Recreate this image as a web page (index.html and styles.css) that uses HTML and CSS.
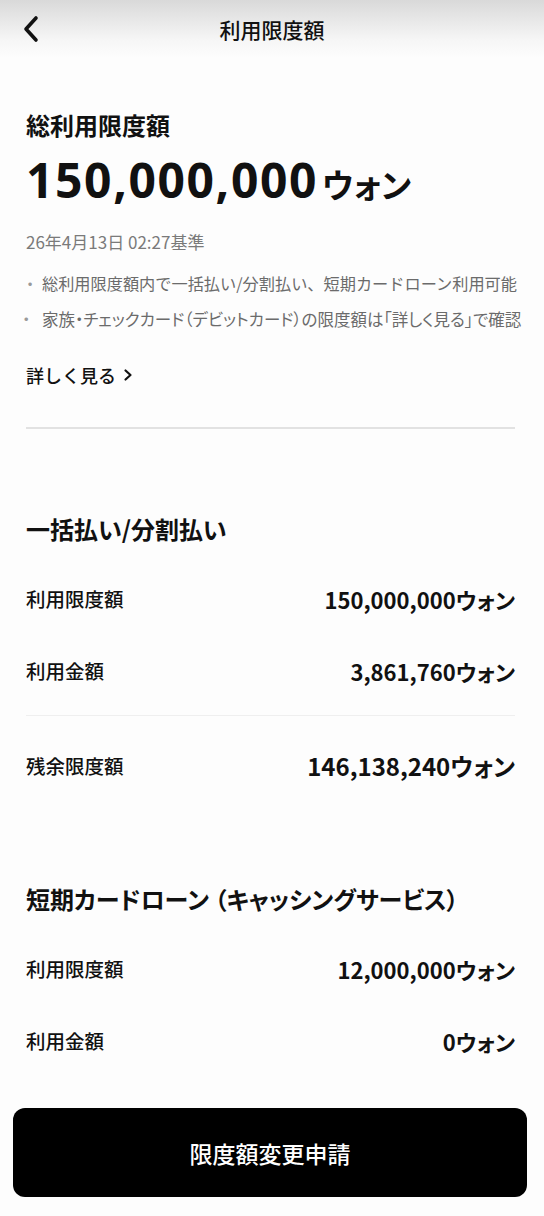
FILE: index.html
```html
<!DOCTYPE html>
<html>
<head>
    <meta charset="utf-8">
    <link rel="stylesheet" href="styles.css">
</head>
<body>
    <div class="app-bar">
        <button type="button" class="back-button" aria-label="戻る">
            <svg width="20" height="28" viewBox="0 0 20 28">
                <path d="M15 3 L5 14 L15 25" fill="none" stroke="#111" stroke-width="3.6" stroke-linecap="round" stroke-linejoin="round"/>
            </svg>
        </button>
        <h1 class="app-title">利用限度額</h1>
    </div>

    <div class="content">
        <!-- Total limit -->
        <section class="summary">
            <h2 class="summary-label">総利用限度額</h2>
            <div class="summary-amount">
                <span class="big-number">150,000,000</span><span class="big-unit">ウォン</span>
            </div>
            <p class="summary-date">26年4月13日 02:27基準</p>
            <ul class="notes">
                <li class="wide">総利用限度額内で一括払い/分割払い、短期カードローン利用可能</li>
                <li>家族・チェックカード（デビットカード）の限度額は「詳しく見る」で確認</li>
            </ul>
            <a class="more-link" href="#">詳しく見る
                <svg width="12" height="14" viewBox="0 0 12 14">
                    <path d="M3.5 2.5 L8.5 7 L3.5 11.5" fill="none" stroke="#111" stroke-width="2.2" stroke-linecap="round" stroke-linejoin="round"/>
                </svg>
            </a>
        </section>

        <hr class="divider">

        <!-- Lump sum / installments -->
        <section class="limit-section">
            <h3 class="section-title">一括払い/分割払い</h3>
            <div class="limit-row">
                <span class="row-label">利用限度額</span>
                <span class="row-value">150,000,000ウォン</span>
            </div>
            <div class="limit-row">
                <span class="row-label">利用金額</span>
                <span class="row-value">3,861,760ウォン</span>
            </div>
            <hr class="row-divider">
            <div class="limit-row remain">
                <span class="row-label">残余限度額</span>
                <span class="row-value">146,138,240ウォン</span>
            </div>
        </section>

        <!-- Cashing -->
        <section class="limit-section cashing">
            <h3 class="section-title">短期カードローン （キャッシングサービス）</h3>
            <div class="limit-row">
                <span class="row-label">利用限度額</span>
                <span class="row-value">12,000,000ウォン</span>
            </div>
            <div class="limit-row">
                <span class="row-label">利用金額</span>
                <span class="row-value">0ウォン</span>
            </div>
        </section>
    </div>

    <div class="bottom-bar">
        <button type="button" class="apply-button">限度額変更申請</button>
    </div>
</body>
</html>
```

FILE: styles.css
```css
body {
    margin: 0;
    background: #fdfdfd;
    font-family: "Noto Sans CJK JP", "Noto Sans", sans-serif;
    color: #111;
}

.app-bar {
    position: relative;
    height: 58px;
    display: flex;
    align-items: center;
    justify-content: center;
    background: linear-gradient(#d9d9d9, #f6f6f6 40px, #fdfdfd);
}

.back-button {
    position: absolute;
    left: 21px;
    top: 15px;
    background: none;
    border: none;
    padding: 0;
    cursor: pointer;
}

.app-title {
    margin: 0;
    font-size: 21px;
    font-weight: 500;
    line-height: 58px;
}

.content {
    padding: 0 29px 0 26px;
}

.summary {
    padding-top: 51px;
}

.summary-label {
    margin: 0;
    font-size: 24px;
    font-weight: 700;
    line-height: 32px;
}

.summary-amount {
    margin-top: 11px;
    display: flex;
    align-items: baseline;
    line-height: 56px;
}

.big-number {
    font-family: "Noto Sans", sans-serif;
    font-size: 48px;
    font-weight: 700;
    letter-spacing: 1.6px;
}

.big-unit {
    margin-left: 4px;
    font-size: 33px;
    font-weight: 700;
    font-feature-settings: "palt";
}

.summary-date {
    margin: 18px 0 0;
    font-size: 17px;
    line-height: 24px;
    color: #7a7a7a;
}

.notes {
    list-style: none;
    margin: 17px 0 0;
    padding: 0;
}

.notes li {
    position: relative;
    padding-left: 16px;
    font-size: 16.5px;
    line-height: 24px;
    color: #6b6b6b;
    white-space: nowrap;
    font-feature-settings: "palt";
}

.notes li.wide {
    font-size: 16.2px;
    font-feature-settings: normal;
}

.notes li + li {
    margin-top: 12px;
}

.notes li::before {
    content: "・";
    position: absolute;
    left: -4px;
    top: 0;
    color: #999;
}

.more-link {
    display: inline-flex;
    align-items: center;
    gap: 6px;
    margin-top: 31px;
    font-size: 18px;
    font-weight: 500;
    line-height: 26px;
    color: #111;
    text-decoration: none;
}

.divider {
    margin: 39px 0 0;
    border: none;
    border-top: 2px solid #e2e2e2;
}

.limit-section {
    padding-top: 84px;
}

.limit-section.cashing {
    padding-top: 79px;
}

.section-title {
    margin: 0 0 18px;
    font-size: 24px;
    font-weight: 700;
    line-height: 32px;
    font-feature-settings: "palt";
}

.limit-row {
    display: flex;
    justify-content: space-between;
    align-items: center;
    padding: 22px 0;
    line-height: 28px;
}

.row-label {
    font-size: 19.5px;
    font-weight: 500;
}

.row-value {
    font-size: 22px;
    font-weight: 600;
    font-feature-settings: "palt";
}

.row-divider {
    margin: 8px 0 0;
    border: none;
    border-top: 1px solid #efefef;
}

.limit-row.remain {
    padding-top: 34px;
    line-height: 32px;
}

.limit-row.remain .row-value {
    font-size: 24px;
    font-weight: 700;
}

.bottom-bar {
    padding: 31px 17px 19px 13px;
}

.apply-button {
    display: block;
    width: 100%;
    height: 89px;
    border: none;
    border-radius: 12px;
    background: #000;
    color: #fff;
    font-family: "Noto Sans CJK JP", sans-serif;
    font-size: 23px;
    font-weight: 500;
    cursor: pointer;
}
```
